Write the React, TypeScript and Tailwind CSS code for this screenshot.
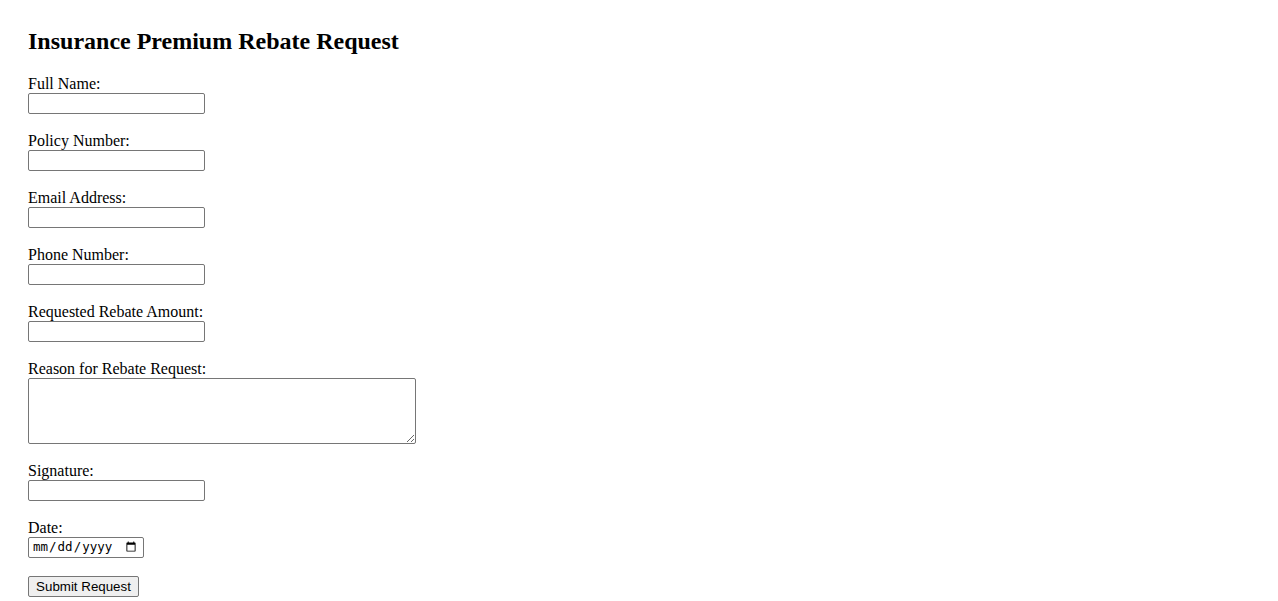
import React from "react";

// Plain form field: label on its own line, then the control
const Field: React.FC<{ label: string; children: React.ReactNode }> = ({
  label,
  children,
}) => (
  <div className="flex flex-col items-start mb-[18px]">
    <label className="block text-[16px] leading-[18px] h-[18px]">{label}</label>
    {children}
  </div>
);

const inputClass =
  "block w-[177px] h-[21px] border border-[#767676] rounded-[2px] bg-white px-[2px] text-[13.33px] font-['Liberation_Sans',Arial,sans-serif] outline-none";

const App: React.FC = () => {
  return (
    <div className="min-h-screen bg-white text-black font-['Liberation_Serif','Times_New_Roman',serif] pl-[28px] pt-[28px]">
      <h2 className="text-[24px] font-bold leading-[27px] mb-[20px]">
        Insurance Premium Rebate Request
      </h2>

      <form className="flex flex-col items-start">
        <Field label="Full Name:">
          <input type="text" className={inputClass} />
        </Field>
        <Field label="Policy Number:">
          <input type="text" className={inputClass} />
        </Field>
        <Field label="Email Address:">
          <input type="email" className={inputClass} />
        </Field>
        <Field label="Phone Number:">
          <input type="tel" className={inputClass} />
        </Field>
        <Field label="Requested Rebate Amount:">
          <input type="text" className={inputClass} />
        </Field>
        <Field label="Reason for Rebate Request:">
          <textarea className="block w-[388px] h-[66px] border border-[#767676] rounded-[2px] bg-white px-[2px] text-[13.33px] font-['Liberation_Mono',monospace] outline-none" />
        </Field>
        <Field label="Signature:">
          <input type="text" className={inputClass} />
        </Field>
        <Field label="Date:">
          <input
            type="date"
            className="block w-[116px] h-[21px] border border-[#767676] rounded-[2px] bg-white pl-[3px] pr-[4px] text-[12.5px] font-['DejaVu_Sans_Mono',monospace] outline-none"
          />
        </Field>
        <button
          type="submit"
          className="w-[111px] h-[21px] border border-[#767676] rounded-[2px] bg-[#efefef] px-[6px] text-[13.33px] leading-[17px] font-['Liberation_Sans',Arial,sans-serif] text-black"
        >
          Submit Request
        </button>
      </form>
    </div>
  );
};

export default App;
